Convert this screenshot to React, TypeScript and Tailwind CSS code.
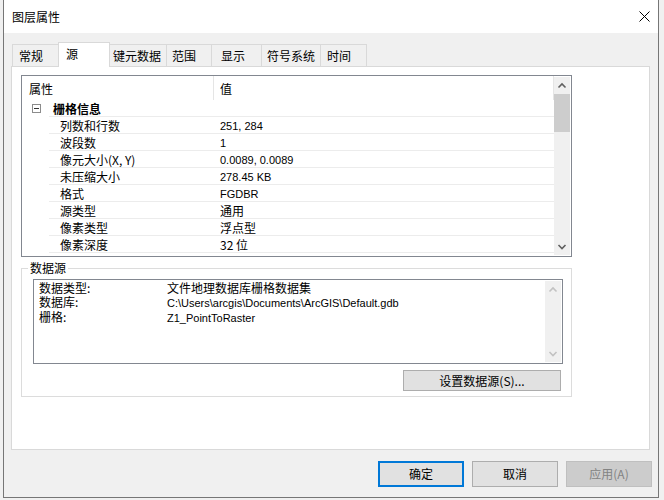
import React from "react";

const tabs = [
  { label: "常规", cls: "w-[47px] pl-[6px]" },
  { label: "源", cls: "w-[52px] pl-[7px]", active: true },
  { label: "键元数据", cls: "w-[58px] pl-[3px]" },
  { label: "范围", cls: "w-[46px] pl-[5px]" },
  { label: "显示", cls: "w-[51px] pl-[9px]" },
  { label: "符号系统", cls: "w-[60px] pl-[5px]" },
  { label: "时间", cls: "w-[47px] pl-[6px]" },
];

// values that are plain latin get the narrower Arial-like face
const rows: [string, string, boolean][] = [
  ["列数和行数", "251, 284", true],
  ["波段数", "1", true],
  ["像元大小(X, Y)", "0.0089, 0.0089", true],
  ["未压缩大小", "278.45 KB", true],
  ["格式", "FGDBR", true],
  ["源类型", "通用", false],
  ["像素类型", "浮点型", false],
  ["像素深度", "32 位", false],
];

const sourceInfo: [string, string, boolean][] = [
  ["数据类型:", "文件地理数据库栅格数据集", false],
  ["数据库:", "C:\\Users\\arcgis\\Documents\\ArcGIS\\Default.gdb", true],
  ["栅格:", "Z1_PointToRaster", true],
];

const Latin = ({ children }: { children: React.ReactNode }) => (
  <span className="text-[11px] font-[family-name:'Liberation_Sans',Arial,sans-serif]">{children}</span>
);

const Chevron = ({ up, color }: { up?: boolean; color: string }) => (
  <svg width="16" height="17" viewBox="0 0 16 17">
    <path
      d={up ? "M4.5 10.5 L8 7 L11.5 10.5" : "M4.5 7 L8 10.5 L11.5 7"}
      fill="none"
      stroke={color}
      strokeWidth="1.6"
    />
  </svg>
);

const PropertyGrid = () => (
  <div className="ml-[9px] mt-[8px] w-[551px] h-[182px] border border-[#828790] flex">
    <div className="flex-1 overflow-hidden">
      {/* header */}
      <div className="flex h-[24px] items-center">
        <div className="w-[192px] h-full pl-[7px] pt-[2px] flex items-center border-r border-[#e5e5e5]">属性</div>
        <div className="flex-1 h-full pl-[6px] pt-[2px] flex items-center border-r border-[#e5e5e5]">值</div>
      </div>
      {/* group */}
      <div className="flex h-[17px]">
        <div className="w-[27px] flex items-center pl-[10px]">
          <div className="w-[9px] h-[9px] border border-[#8c8c8c] flex items-center justify-center">
            <div className="w-[5px] h-px bg-[#333]" />
          </div>
        </div>
        <div className="flex-1 border-b border-[#ececec] flex items-center pl-[4px] pt-[2px] font-bold">栅格信息</div>
      </div>
      {rows.map(([k, v, latin]) => (
        <div key={k} className="flex h-[17px]">
          <div className="w-[27px]" />
          <div className="flex-1 flex border-b border-[#ececec]">
            <div className="w-[165px] pl-[11px] pt-[2px] flex items-center">{k}</div>
            <div className="flex-1 pl-[6px] pt-[2px] flex items-center">{latin ? <Latin>{v}</Latin> : v}</div>
          </div>
        </div>
      ))}
    </div>
    <div className="w-[16px] my-[1px] mr-[1px] bg-[#f0f0f0] flex flex-col">
      <Chevron up color="#606060" />
      <div className="h-[38px] bg-[#cdcdcd]" />
      <div className="flex-1" />
      <Chevron color="#606060" />
    </div>
  </div>
);

const DataSource = () => (
  <fieldset className="ml-[9px] mt-[4px] w-[551px] border border-[#dcdcdc] pb-[5px]">
    <legend className="ml-[6px] px-[2px] leading-[14px]">数据源</legend>
    <div className="ml-[11px] mt-[4px] w-[530px] h-[85px] border border-[#828790] flex">
      <div className="flex-1 pl-[5px] pt-[1px] leading-[13.5px]">
        {sourceInfo.map(([k, v, latin]) => (
          <div key={k} className="flex">
            <div className="w-[128px]">{k}</div>
            <div>{latin ? <Latin>{v}</Latin> : v}</div>
          </div>
        ))}
      </div>
      <div className="w-[16px] my-[1px] mr-[1px] bg-[#f0f0f0] flex flex-col justify-between">
        <Chevron up color="#c2c2c2" />
        <Chevron color="#c2c2c2" />
      </div>
    </div>
    <div className="flex justify-end mr-[10px] mt-[6px]">
      <button className="w-[158px] h-[21px] bg-[#e1e1e1] border border-[#adadad] flex items-center justify-center">
        设置数据源(S)...
      </button>
    </div>
  </fieldset>
);

export default function App() {
  return (
    <div className="w-[664px] h-[500px] bg-[#f0f0f0] pl-[3px] text-[12px] text-black font-[family-name:'Noto_Sans_CJK_SC','Noto_Sans',sans-serif]">
      <div className="w-[656px] h-[498px] border-x border-b border-[#767676] flex flex-col">
        {/* title bar */}
        <div className="h-[33px] bg-white flex items-center justify-between pl-[8px] pr-[8px]">
          <span className="text-[12px]">图层属性</span>
          <svg width="11" height="11" viewBox="0 0 11 11">
            <path d="M0.5 0.5 L10.5 10.5 M10.5 0.5 L0.5 10.5" stroke="#000" strokeWidth="1" />
          </svg>
        </div>
        {/* body */}
        <div className="flex-1 bg-[#f0f0f0] pl-[7px] pr-[8px] pt-[9px]">
          <div className="flex items-end h-[24px] pl-[2px]">
            {tabs.map((t) =>
              t.active ? (
                <div
                  key={t.label}
                  className={`${t.cls} relative z-10 h-[25px] -mb-px -ml-px bg-white border-x border-t border-[#d9d9d9] flex items-center pb-[3px]`}
                >
                  {t.label}
                </div>
              ) : (
                <div
                  key={t.label}
                  className={`${t.cls} h-[22px] -ml-px bg-[#f0f0f0] border-x border-t border-[#d9d9d9] flex items-center`}
                >
                  {t.label}
                </div>
              )
            )}
          </div>
          <div className="h-[384px] border border-[#d9d9d9] bg-white">
            <PropertyGrid />
            <DataSource />
          </div>
          <div className="flex justify-end gap-2 mt-[11px] -mr-[2px]">
            <button className="w-[86px] h-[26px] bg-[#e1e1e1] border-2 border-[#0078d7]">确定</button>
            <button className="w-[86px] h-[26px] bg-[#e1e1e1] border border-[#adadad]">取消</button>
            <button className="w-[86px] h-[26px] bg-[#cccccc] border border-[#bfbfbf] text-[#838383]">应用(A)</button>
          </div>
        </div>
      </div>
    </div>
  );
}
